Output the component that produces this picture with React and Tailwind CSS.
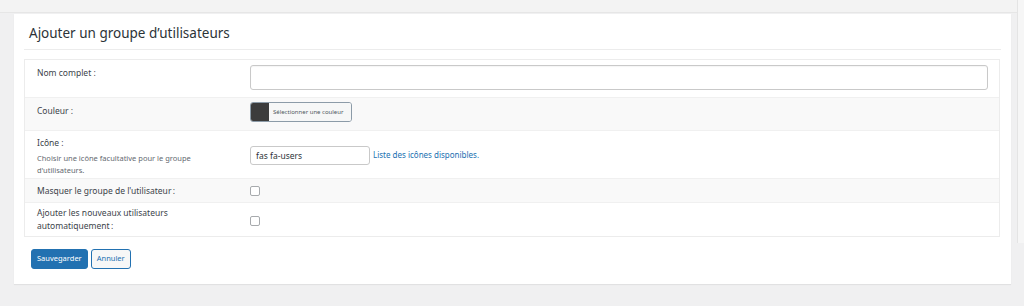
export default function App() {
  const font = { fontFamily: '"Noto Sans", "Open Sans", sans-serif' };
  return (
    <div className="w-[1024px] h-[306px] bg-[#f0f0f1] flex flex-col overflow-hidden text-[#3c434a]" style={font}>
      <div className="h-[13px] bg-[#f3f3f3] border-b border-[#e6e6e6] shrink-0" />
      <div className="flex flex-1">
        <div className="ml-[14px] mt-[1px] w-[997px] h-[270px] bg-white shadow-[0_1px_1px_rgba(0,0,0,0.06)] px-[10px] flex flex-col">
          <div className="h-[36px] flex items-end pl-[5px] pb-[9px] border-b border-[#ececec]">
            <h1 className="text-[13.5px] leading-none text-[#2c3338]">Ajouter un groupe d’utilisateurs</h1>
          </div>
          <div className="mt-[9px] mr-[1px] border border-[#ececec] text-[8.5px] leading-[12px]">
            <div className="flex h-[37px] bg-white">
              <div className="w-[225px] shrink-0 pl-[12px] pt-[7px]">Nom complet :</div>
              <div className="flex-1 pt-[5px] pr-[11px]">
                <div className="h-[25px] border border-[#c9c9c9] rounded-[3px] bg-white shadow-[inset_0_1px_1px_rgba(0,0,0,0.04)]" />
              </div>
            </div>
            <div className="flex h-[33px] bg-[#f9f9f9] border-t border-[#f0f0f0]">
              <div className="w-[225px] shrink-0 pl-[12px] pt-[7px]">Couleur :</div>
              <div className="flex-1 pt-[4px]">
                <div className="flex w-[102px] h-[20px] border border-[#8c9ba8] rounded-[3px] overflow-hidden">
                  <div className="w-[18px] bg-[#3c3c3c]" />
                  <div className="flex-1 bg-[#f6f7f7] text-[6px] text-[#50575e] flex items-center pl-[4px] whitespace-nowrap">Sélectionner une couleur</div>
                </div>
              </div>
            </div>
            <div className="flex h-[48px] bg-white border-t border-[#f0f0f0]">
              <div className="w-[225px] shrink-0 pl-[12px] pt-[6px]">
                <div>Icône :</div>
                <div className="mt-[3px] text-[7.5px] leading-[12px] text-[#646970] w-[170px]">Choisir une icône facultative pour le groupe d'utilisateurs.</div>
              </div>
              <div className="flex-1 pt-[15px] flex items-start">
                <div className="w-[120px] h-[19px] border border-[#c9c9c9] rounded-[3px] flex items-center pl-[5px] text-[8.5px] text-[#2c3338]">fas fa-users</div>
                <a className="ml-[3px] mt-[3px] text-[8px] text-[#2271b1]">Liste des icônes disponibles.</a>
              </div>
            </div>
            <div className="flex h-[24px] bg-[#f9f9f9] border-t border-[#f0f0f0]">
              <div className="w-[225px] shrink-0 pl-[12px] pt-[6px]">Masquer le groupe de l'utilisateur{"\u202F"}:</div>
              <div className="flex-1 pt-[7px]">
                <div className="w-[10px] h-[10px] border border-[#a7aaad] rounded-[2px] bg-white" />
              </div>
            </div>
            <div className="flex h-[34px] bg-white border-t border-[#f0f0f0]">
              <div className="w-[225px] shrink-0 pl-[12px] pt-[4px]">
                <div>Ajouter les nouveaux utilisateurs</div>
                <div className="mt-[1px]">automatiquement{"\u202F"}:</div>
              </div>
              <div className="flex-1 pt-[13px]">
                <div className="w-[10px] h-[10px] border border-[#a7aaad] rounded-[2px] bg-white" />
              </div>
            </div>
          </div>
          <div className="flex gap-[3px] mt-[12px] pl-[7px]">
            <button className="h-[20px] px-[5px] bg-[#2271b1] text-white text-[7.5px] rounded-[3px] border border-[#2271b1]">Sauvegarder</button>
            <button className="h-[20px] px-[5px] bg-[#f6f7f7] text-[#2271b1] text-[7.5px] rounded-[3px] border border-[#2271b1]">Annuler</button>
          </div>
        </div>
        <div className="ml-auto w-[7px] h-[243px] bg-[#f6f6f6] border-l border-[#e4e4e4] mt-[-13px]" />
      </div>
    </div>
  );
}
